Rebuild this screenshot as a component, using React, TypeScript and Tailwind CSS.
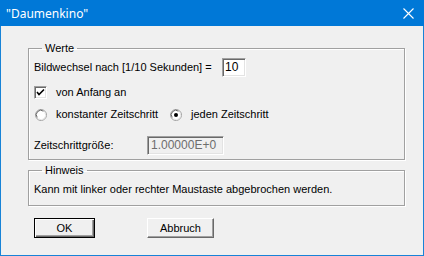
import React from "react";

// sunken 3d edge used by edits, checkbox
const sunken =
  "border border-t-[#a0a0a0] border-l-[#a0a0a0] border-r-white border-b-white shadow-[inset_1px_1px_0_#696969,inset_-1px_-1px_0_#e3e3e3]";

function Button({ label, isDefault }: { label: string; isDefault?: boolean }) {
  return (
    <div
      className={
        "flex h-[20px] items-center justify-center bg-[#f0f0f0] text-[11px] text-black " +
        (isDefault
          ? "w-[61px] border border-black shadow-[inset_1px_1px_0_#ffffff,inset_-1px_-1px_0_#696969,inset_-2px_-2px_0_#a0a0a0]"
          : "w-[67px] border border-t-white border-l-white border-r-[#696969] border-b-[#696969] shadow-[inset_-1px_-1px_0_#a0a0a0]")
      }
    >
      {label}
    </div>
  );
}

function Radio({ checked }: { checked?: boolean }) {
  return (
    <svg width="12" height="12" viewBox="0 0 12 12" className="shrink-0">
      <circle cx="6" cy="6" r="5.5" fill="#ffffff" stroke="#a0a0a0" />
      <path d="M2.2 8.5 A4.5 4.5 0 0 1 8.5 2.2" fill="none" stroke="#696969" />
      <path d="M9.8 3.5 A4.5 4.5 0 0 1 3.5 9.8" fill="none" stroke="#e3e3e3" />
      {checked && <circle cx="6" cy="6" r="2" fill="#000000" />}
    </svg>
  );
}

export default function App() {
  return (
    <div
      className="flex h-[256px] w-[424px] flex-col border-x border-b border-[#1883d7] bg-[#f0f0f0] text-[11px] leading-[13px] text-black"
      style={{ fontFamily: '"Liberation Sans", Arial, sans-serif' }}
    >
      {/* title bar */}
      <div className="-mx-px flex h-[26px] shrink-0 items-center justify-between bg-[#0078d7] pl-[6px] pr-[10px] text-white">
        <span className="text-[12px]" style={{ fontFamily: '"Noto Sans", "Open Sans", sans-serif' }}>
          "Daumenkino"
        </span>
        <svg width="11" height="11" viewBox="0 0 11 11">
          <path d="M0.5 0.5 L10.5 10.5 M10.5 0.5 L0.5 10.5" stroke="#ffffff" strokeWidth="1.1" />
        </svg>
      </div>

      <div className="flex flex-col pl-[27px] pr-[18px] pt-[16px]">
        {/* Werte */}
        <fieldset className="border border-[#a0a0a0] pb-[4px] pl-[5px] shadow-[1px_1px_0_#ffffff,inset_1px_1px_0_#ffffff]">
          <legend className="ml-[8px] px-[3px]">Werte</legend>
          <div className="mt-[3px] flex h-[19px] items-center">
            <span className="w-[188px]">Bildwechsel nach [1/10 Sekunden] =</span>
            <div className={"flex h-[19px] w-[24px] items-center bg-white pl-[2px] text-[12px] " + sunken}>10</div>
          </div>
          <div className="mt-[9px] flex h-[13px] items-center">
            <div className={"flex h-[13px] w-[13px] shrink-0 items-center justify-center bg-white " + sunken}>
              <svg width="9" height="9" viewBox="0 0 9 9">
                <path d="M1 4 L3 6.5 L8 1.5" fill="none" stroke="#000000" strokeWidth="1.6" />
              </svg>
            </div>
            <span className="ml-[9px]">von Anfang an</span>
          </div>
          <div className="mt-[9px] flex h-[13px] items-center">
            <div className="flex w-[136px] items-center pl-px">
              <Radio />
              <span className="ml-[9px]">konstanter Zeitschritt</span>
            </div>
            <Radio checked />
            <span className="ml-[9px]">jeden Zeitschritt</span>
          </div>
          <div className="mt-[15px] flex h-[19px] items-center">
            <span className="w-[113px] text-black">Zeitschrittgröße:</span>
            <div className={"flex h-[19px] w-[77px] items-center bg-[#f0f0f0] pl-[3px] text-[12px] text-[#6d6d6d] " + sunken}>
              1.00000E+0
            </div>
          </div>
        </fieldset>

        {/* Hinweis */}
        <fieldset className="mt-[4px] border border-[#a0a0a0] pb-[9px] pl-[5px] shadow-[1px_1px_0_#ffffff,inset_1px_1px_0_#ffffff]">
          <legend className="ml-[8px] px-[3px]">Hinweis</legend>
          <div className="mt-[6px]">Kann mit linker oder rechter Maustaste abgebrochen werden.</div>
        </fieldset>

        <div className="mt-[12px] flex gap-[52px] pl-[6px]">
          <Button label="OK" isDefault />
          <Button label="Abbruch" />
        </div>
      </div>
    </div>
  );
}
